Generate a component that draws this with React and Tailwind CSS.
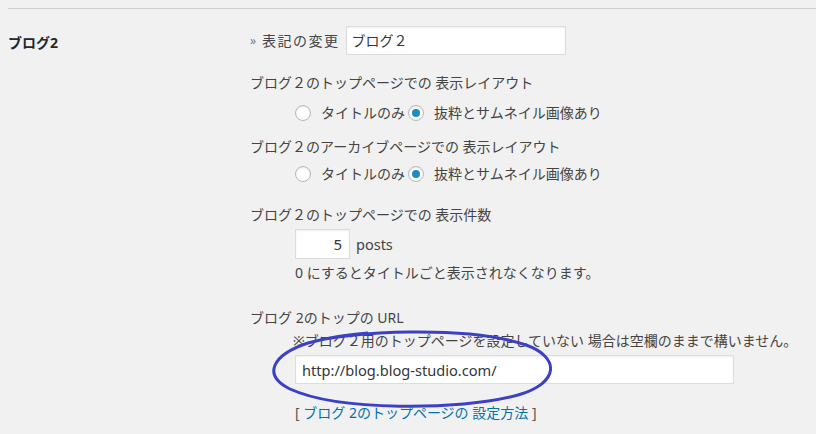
import React from "react";

const font = { fontFamily: '"Noto Sans", "Noto Sans CJK JP", sans-serif' };

function Radio({ checked }) {
  return (
    <span className="inline-flex items-center justify-center w-4 h-4 rounded-full border border-[#b4b9be] bg-white shadow-[inset_0_1px_2px_rgba(0,0,0,0.1)] shrink-0">
      {checked && <span className="w-2 h-2 rounded-full bg-[#1e8cbe]" />}
    </span>
  );
}

function RadioRow({ className }) {
  return (
    <div className={"flex items-center h-5 pl-[45px] " + className}>
      <Radio />
      <span className="ml-[10px] mr-[3px]">タイトルのみ</span>
      <Radio checked />
      <span className="ml-[10px]">抜粋とサムネイル画像あり</span>
    </div>
  );
}

export default function App() {
  return (
    <div
      className="relative w-[816px] h-[434px] overflow-hidden bg-[#f1f1f1] text-[14px] leading-5 text-[#444]"
      style={font}
    >
      <div className="ml-2 mt-2 border-t border-[#cfcfcf]" />
      <div className="flex">
        <div className="w-[250px] pl-2 pt-[24px] font-bold text-[#23282d]">ブログ2</div>
        <div className="flex-1">
          <div className="flex items-center mt-[17px] h-[29px]">
            <span className="text-[#777] text-[12px] mr-[6px]">»</span>
            <span className="tracking-[1.5px]">表記の変更</span>
            <div className="ml-[6px] w-[220px] h-[29px] bg-white border border-[#ddd] shadow-[inset_0_1px_2px_rgba(0,0,0,0.07)] flex items-center px-[5px] text-[#32373c]">
              ブログ２
            </div>
          </div>

          <div className="mt-[18px]">ブログ２のトップページでの 表示レイアウト</div>
          <RadioRow className="mt-[10px]" />

          <div className="mt-[14px]">ブログ２のアーカイブページでの 表示レイアウト</div>
          <RadioRow className="mt-[7px]" />

          <div className="mt-[21px]">ブログ２のトップページでの 表示件数</div>
          <div className="flex items-center mt-[4px] pl-[45px]">
            <div className="w-[55px] h-[30px] bg-white border border-[#ddd] shadow-[inset_0_1px_2px_rgba(0,0,0,0.07)] flex items-center justify-end pr-[7px] text-[#32373c] text-[15px]">
              5
            </div>
            <span className="ml-[6px] text-[14.5px]">posts</span>
          </div>
          <div className="mt-[4px] pl-[45px]">0 にするとタイトルごと表示されなくなります。</div>

          <div className="mt-[25px]">ブログ 2のトップの URL</div>
          <div className="mt-[3px] pl-[43px]">※ブログ２用のトップページを設定していない 場合は空欄のままで構いません。</div>
          <div className="mt-[4px] ml-[45px] w-[439px] h-[29px] bg-white border border-[#ddd] shadow-[inset_0_1px_2px_rgba(0,0,0,0.07)] flex items-center pl-[6px] text-[#32373c] text-[14.6px]">
            http://blog.blog-studio.com/
          </div>
          <div className="mt-[19px] pl-[45px]">
            <span className="text-[#555]">[ </span>
            <span className="text-[#0073aa]">ブログ 2のトップページの 設定方法</span>
            <span className="text-[#555]"> ]</span>
          </div>
        </div>
      </div>

      <svg
        className="absolute left-[268px] top-[327px] pointer-events-none"
        width="290"
        height="82"
        viewBox="0 0 290 82"
      >
        <path
          d="M 40 16 C 80 4, 200 -2, 258 18 C 292 30, 292 56, 250 68 C 190 84, 70 84, 22 62 C -6 48, 4 28, 40 16 Q 70 8, 100 6"
          fill="none"
          stroke="#3c40c6"
          strokeWidth="3"
        />
      </svg>
    </div>
  );
}
